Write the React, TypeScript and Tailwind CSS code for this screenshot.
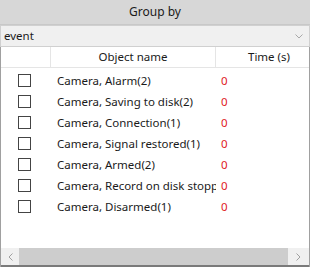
import React from "react";

const rows = [
  "Camera, Alarm(2)",
  "Camera, Saving to disk(2)",
  "Camera, Connection(1)",
  "Camera, Signal restored(1)",
  "Camera, Armed(2)",
  "Camera, Record on disk stopped(1)",
  "Camera, Disarmed(1)",
];

export default function App() {
  return (
    <div
      className="w-[310px] h-[267px] bg-white flex flex-col text-[11.5px] text-[#1a1a1a] overflow-hidden"
      style={{ fontFamily: '"Noto Sans", "Segoe UI", sans-serif' }}
    >
      <div className="h-[25px] bg-[#d7d7d7] flex items-center justify-center border-b border-[#c8c8c8] text-[12px]">
        Group by
      </div>
      <div className="h-[22px] bg-[#f0f0f0] border border-[#d0d0d0] flex items-center justify-between pl-[3px] pr-[6px]">
        <span>event</span>
        <svg width="8" height="5" viewBox="0 0 8 5" fill="none">
          <path d="M0.5 0.5 L4 4 L7.5 0.5" stroke="#a8a8a8" strokeWidth="1" />
        </svg>
      </div>
      <div className="flex-1 flex flex-col border-l border-r border-[#a0a0a0]">
        <div className="h-[21px] flex border-b border-[#e5e5e5]">
          <div className="w-[50px] border-r border-[#e5e5e5]" />
          <div className="w-[165px] border-r border-[#e5e5e5] flex items-center justify-center">
            Object name
          </div>
          <div className="flex-1 flex items-center justify-center pl-[13px]">Time (s)</div>
        </div>
        <div className="flex-1 flex flex-col pt-[2px]">
          {rows.map((r) => (
            <div key={r} className="h-[21px] flex items-center">
              <div className="w-[50px] flex items-center pl-[17px]">
                <div className="w-[13px] h-[13px] border border-[#444444] bg-white" />
              </div>
              <div className="w-[165px] pl-[6px] pr-[2px] whitespace-nowrap overflow-hidden">{r}</div>
              <div className="flex-1 pl-[5px] text-[#e0191b]">0</div>
            </div>
          ))}
        </div>
        <div className="h-[19px] flex bg-[#f0f0f0] border-b-2 border-[#7a7a7a]">
          <div className="w-[18px] flex items-center justify-center">
            <svg width="5" height="8" viewBox="0 0 5 8" fill="none">
              <path d="M4.5 0.5 L1 4 L4.5 7.5" stroke="#a0a0a0" strokeWidth="1" />
            </svg>
          </div>
          <div className="flex-1 bg-[#cdcdcd]" />
          <div className="w-[21px] flex items-center justify-center">
            <svg width="5" height="8" viewBox="0 0 5 8" fill="none">
              <path d="M0.5 0.5 L4 4 L0.5 7.5" stroke="#a0a0a0" strokeWidth="1" />
            </svg>
          </div>
        </div>
      </div>
    </div>
  );
}
